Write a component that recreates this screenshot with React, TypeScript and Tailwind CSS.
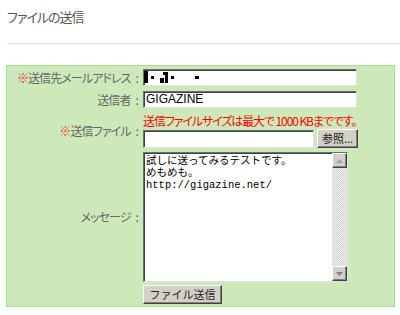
import React from 'react';

const font = { fontFamily: '"Noto Sans CJK JP", "Liberation Sans", sans-serif' };

function Label({ children, mark }: { children: React.ReactNode; mark?: boolean }) {
  return (
    <div className="w-[136px] shrink-0 text-right text-[12px] leading-[14px] text-[#666] pr-[5px] whitespace-nowrap tracking-[-0.9px] [font-feature-settings:'palt']">
      {mark && <span className="text-[#e33]">※</span>}
      {children}
      <span className="ml-[5px]">:</span>
    </div>
  );
}

const inset =
  'border border-t-[#6e6e6e] border-l-[#6e6e6e] border-r-[#e2e2e2] border-b-[#e2e2e2] bg-white shadow-[inset_1px_1px_0_#404040]';
const outset =
  'border border-t-[#fff] border-l-[#fff] border-r-[#404040] border-b-[#404040] bg-[#d4d0c8] shadow-[inset_-1px_-1px_0_#808080]';

function ScrollArrow({ up }: { up?: boolean }) {
  return (
    <div className={`h-[15px] w-[15px] flex items-center justify-center ${outset}`}>
      <svg width="7" height="4" viewBox="0 0 7 4">
        {up ? <path d="M3.5 0 L7 4 H0 Z" fill="#a0a0a0" /> : <path d="M0 0 H7 L3.5 4 Z" fill="#808080" />}
      </svg>
    </div>
  );
}

export default function App() {
  return (
    <div className="w-[400px] h-[315px] bg-white overflow-hidden" style={font}>
      {/* Header */}
      <div className="pl-[7px] pt-[9px] text-[13px] leading-[16px] text-[#555] tracking-[-1px] [font-feature-settings:'palt']">ファイルの送信</div>
      <div className="ml-[7px] mt-[18px] h-px bg-[#dcdcdc]" />

      {/* Form panel */}
      <div className="ml-[6px] mr-[5px] mt-[21px] border border-[#a9dd95] bg-[#cde9ba] pt-[3px] pb-[2px]">
        <div className="flex items-center h-[17px]">
          <Label mark>送信先メールアドレス</Label>
          <div className={`w-[214px] h-[17px] ${inset}`}>
            <svg width="80" height="15" viewBox="0 0 80 15">
              <rect x="0" y="1" width="4" height="12" fill="#000" />
              <rect x="7" y="6" width="3" height="3" fill="#000" />
              <rect x="16" y="8" width="4" height="5" fill="#000" />
              <rect x="19" y="2" width="5" height="3" fill="#000" />
              <rect x="21" y="2" width="3" height="11" fill="#000" />
              <rect x="27" y="6" width="3" height="3" fill="#000" />
              <rect x="51" y="6" width="4" height="3" fill="#000" />
            </svg>
          </div>
        </div>

        <div className="flex items-center h-[17px] mt-[5px]">
          <Label>送信者</Label>
          <div className={`w-[214px] h-[17px] ${inset} text-[12px] leading-[15px] text-black pl-[2px]`} style={{ fontFamily: '"Liberation Sans", sans-serif' }}>
            GIGAZINE
          </div>
        </div>

        <div className="flex items-center mt-[5px]">
          <Label mark>送信ファイル</Label>
          <div>
            <div className="text-[12px] leading-[15px] text-[#f00] whitespace-nowrap tracking-[-1.1px] [font-feature-settings:'palt']">送信ファイルサイズは最大で 1000 KBまでです。</div>
            <div className="flex items-center gap-[3px] mt-[1px]">
              <div className={`w-[171px] h-[18px] ${inset}`} />
              <div className={`w-[41px] h-[19px] ${outset} text-[11px] leading-[16px] text-[#222] text-center`}>参照...</div>
            </div>
          </div>
        </div>

        <div className="flex items-center mt-[4px]">
          <Label>メッセージ</Label>
          <div className={`w-[205px] h-[130px] ${inset} flex`}>
            <div className="flex-1 pl-[2px] pt-[2px] text-[10.5px] leading-[12px] text-black whitespace-pre" style={{ fontFamily: '"Liberation Mono", "Noto Sans CJK JP", monospace' }}>
              {'試しに送ってみるテストです。\nめもめも。\nhttp://gigazine.net/'}
            </div>
            <div className="w-[15px] flex flex-col bg-[image:repeating-conic-gradient(#cfcfcf_0_25%,#f4f4f4_0_50%)] bg-[length:2px_2px]">
              <ScrollArrow up />
              <div className="flex-1" />
              <ScrollArrow />
            </div>
          </div>
        </div>

        <div className="flex mt-[3px]">
          <div className="w-[136px] shrink-0" />
          <div className={`w-[79px] h-[19px] ${outset} text-[11px] leading-[16px] text-[#222] text-center`}>ファイル送信</div>
        </div>
      </div>
    </div>
  );
}
